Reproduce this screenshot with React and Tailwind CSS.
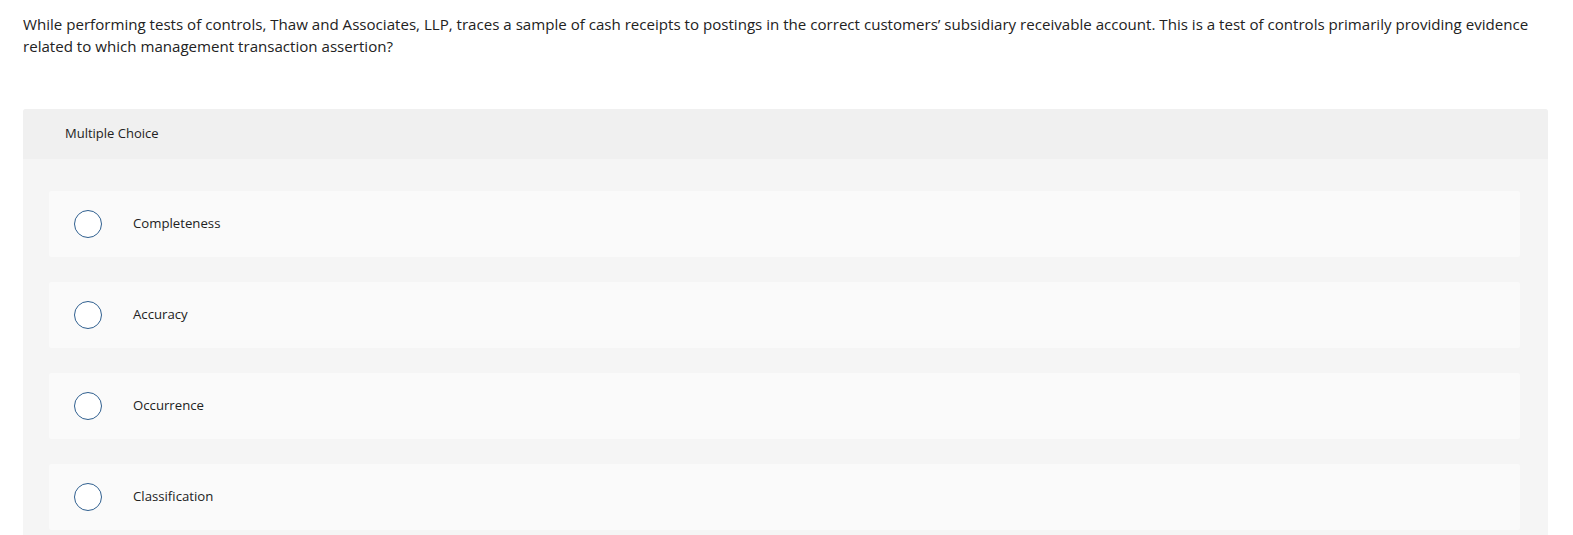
const options = ['Completeness', 'Accuracy', 'Occurrence', 'Classification']

function Radio() {
  return <span className="block w-[28px] h-[28px] rounded-full border-[1.5px] border-[#2f5f8f] bg-white shrink-0" />
}

export default function App() {
  return (
    <div className="bg-white min-h-[535px] text-[#1f1f1f]" style={{ fontFamily: '"Open Sans", "Liberation Sans", sans-serif' }}>
      <p className="pl-[23px] pr-[30px] pt-[13px] text-[15.1px] leading-[22px] text-[#222]">
        While performing tests of controls, Thaw and Associates, LLP, traces a sample of cash receipts to postings in the correct customers’ subsidiary receivable account. This is a test of controls primarily providing evidence related to which management transaction assertion?
      </p>
      <div className="ml-[23px] mr-[25px] mt-[52px] rounded-t-[3px] overflow-hidden bg-[#f5f5f5]">
        <div className="h-[50px] bg-[#f0f0f0] flex items-center pl-[42px] text-[13px] text-[#222]">Multiple Choice</div>
        <div className="flex flex-col gap-[25px] pt-[32px] pl-[26px] pr-[28px] pb-[10px]">
          {options.map((o) => (
            <div key={o} className="h-[66px] bg-[#fafafa] rounded-[2px] flex items-center pl-[25px]">
              <Radio />
              <span className="ml-[31px] text-[13.2px] text-[#222]">{o}</span>
            </div>
          ))}
        </div>
      </div>
    </div>
  )
}
